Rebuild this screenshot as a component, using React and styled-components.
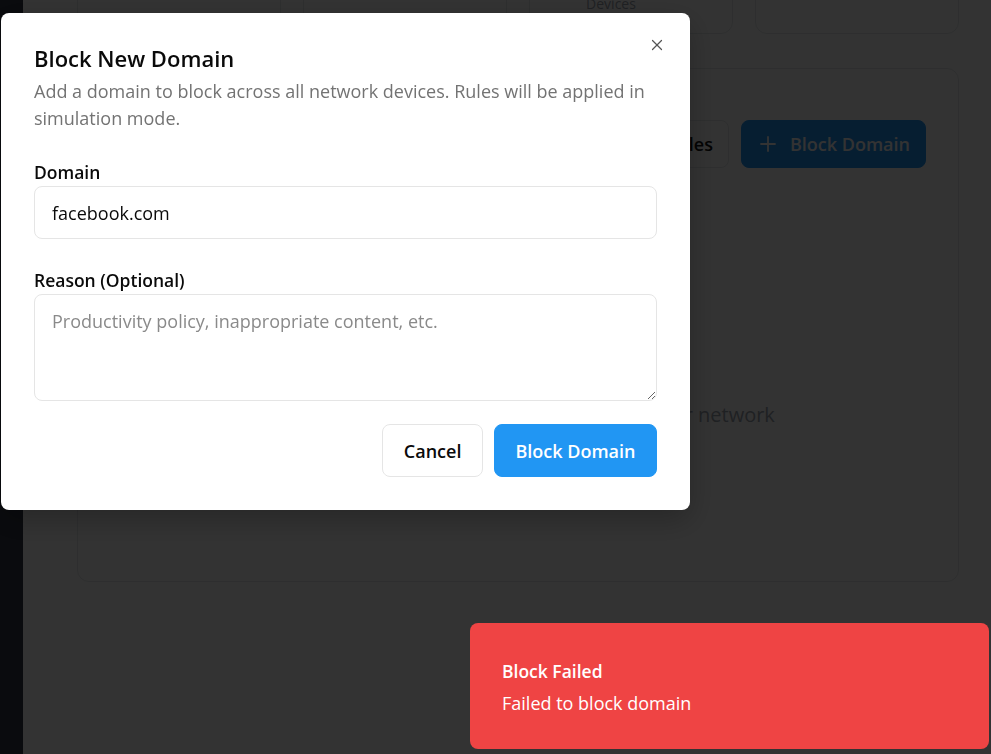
import React from 'react';
import styled, { createGlobalStyle } from 'styled-components';
import { Plus, X } from 'lucide-react';

const GlobalStyle = createGlobalStyle`
  html, body {
    margin: 0;
    padding: 0;
    height: 100%;
    overflow: hidden;
    background: #ffffff;
    font-family: "Open Sans", "Noto Sans", sans-serif;
  }
  * { box-sizing: border-box; }
`;

const Page = styled.div`
  display: flex;
  height: 754px;
  overflow: hidden;
`;

const Sidebar = styled.aside`
  width: 23px;
  flex-shrink: 0;
  background: #323746;
`;

const Main = styled.main`
  flex: 1;
  padding: 0 32px 0 54px;
`;

// the page is scrolled, so the stat cards sit mostly above the window
const StatsGrid = styled.section`
  display: grid;
  grid-template-columns: repeat(4, 1fr);
  gap: 22px;
  margin-top: -86px;
`;

const StatCard = styled.div`
  height: 120px;
  border: 1px solid #e5e7eb;
  border-radius: 12px;
  background: #ffffff;
  display: flex;
  flex-direction: column;
  align-items: center;
  padding: 30px ${(p) => p.$shift || 0}px 0 0;
`;

const StatValue = styled.div`
  font-size: 24px;
  line-height: 32px;
  font-weight: 700;
  color: #111827;
`;

const StatCaption = styled.div`
  max-width: 90px;
  text-align: center;
  font-size: 14px;
  line-height: 18px;
  color: #9ca3af;
`;

const Panel = styled.section`
  margin-top: 34px;
  height: 514px;
  border: 1px solid #e5e7eb;
  border-radius: 12px;
  background: #ffffff;
`;

const PanelHeader = styled.div`
  display: flex;
  justify-content: flex-end;
  gap: 12px;
  padding: 51px 32px 0;
`;

const HeaderButton = styled.button`
  height: 48px;
  display: flex;
  align-items: center;
  gap: 10px;
  padding: 0 15px 0 ${(p) => (p.$primary ? 14 : 17)}px;
  border-radius: 8px;
  font-family: inherit;
  font-size: 18px;
  font-weight: 600;
  border: 1px solid ${(p) => (p.$primary ? '#2196f3' : '#e5e7eb')};
  background: ${(p) => (p.$primary ? '#2196f3' : '#ffffff')};
  color: ${(p) => (p.$primary ? '#ffffff' : '#111111')};
`;

const EmptyState = styled.p`
  margin: 0;
  padding: 233px 14px 0 0;
  text-align: center;
  font-size: 20px;
  line-height: 28px;
  color: #9ca3af;
`;

const Overlay = styled.div`
  position: fixed;
  inset: 0;
  background: rgba(0, 0, 0, 0.8);
`;

const Modal = styled.div`
  position: fixed;
  top: 13px;
  left: 1px;
  width: 689px;
  background: #ffffff;
  border-radius: 8px;
  padding: 31px 33px 33px;
  box-shadow: 0 10px 30px rgba(0, 0, 0, 0.25);
`;

const CloseButton = styled.button`
  position: absolute;
  top: 23px;
  right: 24px;
  width: 18px;
  height: 18px;
  padding: 0;
  border: none;
  background: none;
  color: #555555;
  display: flex;
  align-items: center;
  justify-content: center;
`;

const Title = styled.h2`
  margin: 0;
  font-size: 22px;
  line-height: 28px;
  font-weight: 600;
  color: #0a0a0a;
`;

const Description = styled.p`
  margin: 6px 0 0;
  font-size: 18px;
  line-height: 27px;
  color: #737373;
`;

const Field = styled.div`
  display: flex;
  flex-direction: column;
  gap: 2px;
  margin-top: ${(p) => p.$gap}px;
`;

const Label = styled.label`
  font-size: 17.5px;
  line-height: 24px;
  font-weight: 600;
  color: #0a0a0a;
`;

const Input = styled.input`
  height: 53px;
  width: 100%;
  padding: 0 17px;
  border: 1px solid #e5e5e5;
  border-radius: 8px;
  font-family: inherit;
  font-size: 18px;
  color: #0a0a0a;
  outline: none;
`;

const TextArea = styled.textarea`
  display: block;
  height: 107px;
  width: 100%;
  padding: 13px 17px;
  border: 1px solid #e5e5e5;
  border-radius: 8px;
  font-family: inherit;
  font-size: 18px;
  line-height: 26px;
  color: #0a0a0a;
  outline: none;
  &::placeholder { color: #8a8a8a; }
`;

const Actions = styled.div`
  display: flex;
  justify-content: flex-end;
  gap: 11px;
  margin-top: 23px;
`;

const ModalButton = styled.button`
  height: 53px;
  padding: 0 20.5px;
  border-radius: 8px;
  font-family: inherit;
  font-size: 18px;
  font-weight: 600;
  border: 1px solid ${(p) => (p.$primary ? '#2196f3' : '#e5e5e5')};
  background: ${(p) => (p.$primary ? '#2196f3' : '#ffffff')};
  color: ${(p) => (p.$primary ? '#ffffff' : '#0a0a0a')};
`;

const Toast = styled.div`
  position: fixed;
  left: 470px;
  top: 623px;
  width: 519px;
  height: 126px;
  background: #ef4444;
  border-radius: 8px;
  padding: 2px 32px 0;
  display: flex;
  flex-direction: column;
  justify-content: center;
  gap: 8px;
  color: #ffffff;
`;

const ToastTitle = styled.div`
  font-size: 17.5px;
  line-height: 24px;
  font-weight: 600;
`;

const ToastText = styled.div`
  font-size: 18px;
  line-height: 24px;
`;

const stats = [
  { value: '0', caption: 'Rules' },
  { value: '0', caption: 'Active' },
  { value: '0', caption: 'Protected Devices', shift: 40 },
  { value: 'Sim', caption: 'Mode' },
];

export default function App() {
  return (
    <>
      <GlobalStyle />
      <Page>
        <Sidebar />
        <Main>
          <StatsGrid>
            {stats.map((s) => (
              <StatCard key={s.caption} $shift={s.shift}>
                <StatValue>{s.value}</StatValue>
                <StatCaption>{s.caption}</StatCaption>
              </StatCard>
            ))}
          </StatsGrid>
          <Panel>
            <PanelHeader>
              <HeaderButton>Import Rules</HeaderButton>
              <HeaderButton $primary>
                <Plus size={24} strokeWidth={1.8} />
                Block Domain
              </HeaderButton>
            </PanelHeader>
            <EmptyState>No domains blocked yet. Block sites across your network</EmptyState>
          </Panel>
        </Main>
      </Page>
      <Overlay />
      <Modal role="dialog">
        <CloseButton aria-label="Close">
          <X size={18} strokeWidth={1.6} />
        </CloseButton>
        <Title>Block New Domain</Title>
        <Description>
          Add a domain to block across all network devices. Rules will be applied in simulation mode.
        </Description>
        <Field $gap={28}>
          <Label>Domain</Label>
          <Input defaultValue="facebook.com" />
        </Field>
        <Field $gap={29}>
          <Label>Reason (Optional)</Label>
          <TextArea placeholder="Productivity policy, inappropriate content, etc." />
        </Field>
        <Actions>
          <ModalButton>Cancel</ModalButton>
          <ModalButton $primary>Block Domain</ModalButton>
        </Actions>
      </Modal>
      <Toast>
        <ToastTitle>Block Failed</ToastTitle>
        <ToastText>Failed to block domain</ToastText>
      </Toast>
    </>
  );
}
